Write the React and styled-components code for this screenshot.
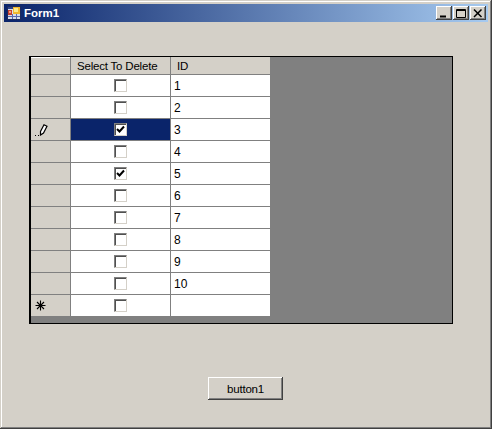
import React from "react";
import styled, { createGlobalStyle } from "styled-components";

const Global = createGlobalStyle`
  html, body { margin: 0; padding: 0; background: #d4d0c8; }
  * { box-sizing: border-box; }
`;

const Win = styled.div`
  width: 492px;
  height: 429px;
  background: #d4d0c8;
  padding: 4px;
  display: flex;
  flex-direction: column;
  font-family: "Liberation Sans", Arial, sans-serif;
  font-size: 12px;
  color: #000;
  box-shadow: inset -1px -1px 0 #404040, inset 1px 1px 0 #d4d0c8, inset -2px -2px 0 #808080, inset 2px 2px 0 #fff;
`;

const TitleBar = styled.div`
  height: 18px;
  flex: none;
  display: flex;
  align-items: center;
  padding: 0 2px 0 3px;
  background: linear-gradient(90deg, #0a246a, #a6caf0);
`;

const TitleText = styled.span`
  font-family: "Liberation Sans", sans-serif;
  font-weight: bold;
  font-size: 11.5px;
  color: #fff;
  margin-left: 3px;
  flex: 1;
`;

const CapBtn = styled.div`
  width: 16px;
  height: 14px;
  margin-left: 1px;
  background: #d4d0c8;
  box-shadow: inset -1px -1px 0 #404040, inset 1px 1px 0 #fff, inset -2px -2px 0 #808080;
  display: flex;
  align-items: center;
  justify-content: center;
`;

const Client = styled.div`
  flex: 1;
  display: flex;
  flex-direction: column;
  align-items: flex-start;
  padding: 34px 0 0 25px;
`;

const GridView = styled.div`
  width: 424px;
  height: 268px;
  background: #808080;
  border: 1px solid #000;
  border-left-width: 2px;
  display: flex;
  flex-direction: column;
  align-items: flex-start;
  flex: none;
`;

const Row = styled.div`
  display: grid;
  grid-template-columns: 40px 100px 99px;
  width: 239px;
  height: ${(p) => (p.$head ? 18 : 22)}px;
  flex: none;
`;

const RowHead = styled.div`
  background: #d4d0c8;
  border-right: 1px solid #808080;
  border-bottom: 1px solid #808080;
  box-shadow: inset 0 1px 0 ${(p) => (p.$head ? "#fff" : "transparent")};
  display: flex;
  align-items: center;
  padding-left: 4px;
`;

const ColHead = styled.div`
  background: #d4d0c8;
  border-right: ${(p) => (p.$last ? "0" : "1px solid #808080")};
  border-bottom: 1px solid #808080;
  display: flex;
  align-items: center;
  padding-left: ${(p) => p.$pad}px;
  white-space: nowrap;
  font-size: 11.5px;
  letter-spacing: -0.2px;
`;

const CheckCell = styled.div`
  background: ${(p) => (p.$sel ? "#0a246a" : "#fff")};
  border-right: 1px solid #808080;
  border-bottom: 1px solid #808080;
  display: flex;
  align-items: center;
  justify-content: center;
`;

const Box = styled.div`
  width: 13px;
  height: 13px;
  background: #fff;
  border-style: solid;
  border-width: 1px;
  border-color: #808080 #d4d0c8 #d4d0c8 #808080;
  box-shadow: inset 1px 1px 0 #505050;
  display: flex;
  align-items: center;
  justify-content: center;
`;

const IdCell = styled.div`
  background: #fff;
  border-bottom: 1px solid #808080;
  display: flex;
  align-items: center;
  padding-left: 3px;
  font-size: 12px;
`;

const Button = styled.button`
  align-self: flex-start;
  margin: 53px 0 0 179px;
  width: 75px;
  height: 23px;
  padding: 0;
  background: #d4d0c8;
  border: 0;
  font-family: "Liberation Sans", Arial, sans-serif;
  font-size: 11.5px;
  letter-spacing: -0.2px;
  color: #000;
  box-shadow: inset -1px -1px 0 #404040, inset 1px 1px 0 #fff, inset -2px -2px 0 #808080;
`;

const AppIcon = () => (
  <svg width="14" height="14" viewBox="0 0 14 14">
    <rect x="0.500" y="0.500" width="13" height="13" fill="#d8dce8" stroke="#1c2a5c" />
    <rect x="1" y="1" width="12" height="2" fill="#2a3f88" />
    <rect x="6" y="1" width="7" height="7" fill="#f0b830" />
    <rect x="7" y="2" width="4" height="4" fill="#fbe88a" />
    <rect x="1" y="4" width="4" height="5" fill="#c84030" />
    <rect x="2" y="5" width="2" height="2" fill="#f0a080" />
    <path d="M1 10.500h12M5.500 8v5M9.500 8v5" stroke="#5a6ab0" />
  </svg>
);

const Pencil = () => (
  <svg width="13" height="12" viewBox="0 0 13 12">
    <path d="M5.500 11 L5.500 7.500 L9 0.800 L12 2.200 L8.500 9 Z" fill="#fff" stroke="#000" strokeWidth="1.200" />
    <path d="M0 11.500h1M3 11.500h1" stroke="#000" />
  </svg>
);

const Star = () => (
  <svg width="11" height="11" viewBox="0 0 11 11">
    <path d="M5.500 0.500v10M0.500 5.500h10M2 2l7 7M9 2l-7 7" stroke="#000" strokeWidth="1.100" fill="none" />
  </svg>
);

const Tick = () => (
  <svg width="9" height="9" viewBox="0 0 9 9">
    <path d="M1 4l2.500 2.500L8 1.500" stroke="#000" strokeWidth="2" fill="none" />
  </svg>
);

const rows = [
  { id: "1" },
  { id: "2" },
  { id: "3", checked: true, sel: true, mark: <Pencil /> },
  { id: "4" },
  { id: "5", checked: true },
  { id: "6" },
  { id: "7" },
  { id: "8" },
  { id: "9" },
  { id: "10" },
  { id: "", mark: <Star /> },
];

export default function App() {
  return (
    <Win>
      <Global />
      <TitleBar>
        <AppIcon />
        <TitleText>Form1</TitleText>
        <CapBtn>
          <svg width="10" height="9" viewBox="0 0 10 9"><path d="M1 7.500h6" stroke="#000" strokeWidth="2" /></svg>
        </CapBtn>
        <CapBtn>
          <svg width="10" height="9" viewBox="0 0 10 9"><path d="M0.500 0.500h9v8h-9z M0.500 1.500h9" stroke="#000" fill="none" /></svg>
        </CapBtn>
        <CapBtn>
          <svg width="10" height="9" viewBox="0 0 10 9"><path d="M1 0.500l7.500 7.500M8.500 0.500l-7.500 7.500" stroke="#000" strokeWidth="1.500" fill="none" /></svg>
        </CapBtn>
      </TitleBar>
      <Client>
        <GridView>
          <Row $head>
            <RowHead $head />
            <ColHead $pad={6}>Select To Delete</ColHead>
            <ColHead $pad={6} $last>ID</ColHead>
          </Row>
          {rows.map((r, i) => (
            <Row key={i}>
              <RowHead>{r.mark}</RowHead>
              <CheckCell $sel={r.sel}>
                <Box>{r.checked && <Tick />}</Box>
              </CheckCell>
              <IdCell>{r.id}</IdCell>
            </Row>
          ))}
        </GridView>
        <Button>button1</Button>
      </Client>
    </Win>
  );
}
